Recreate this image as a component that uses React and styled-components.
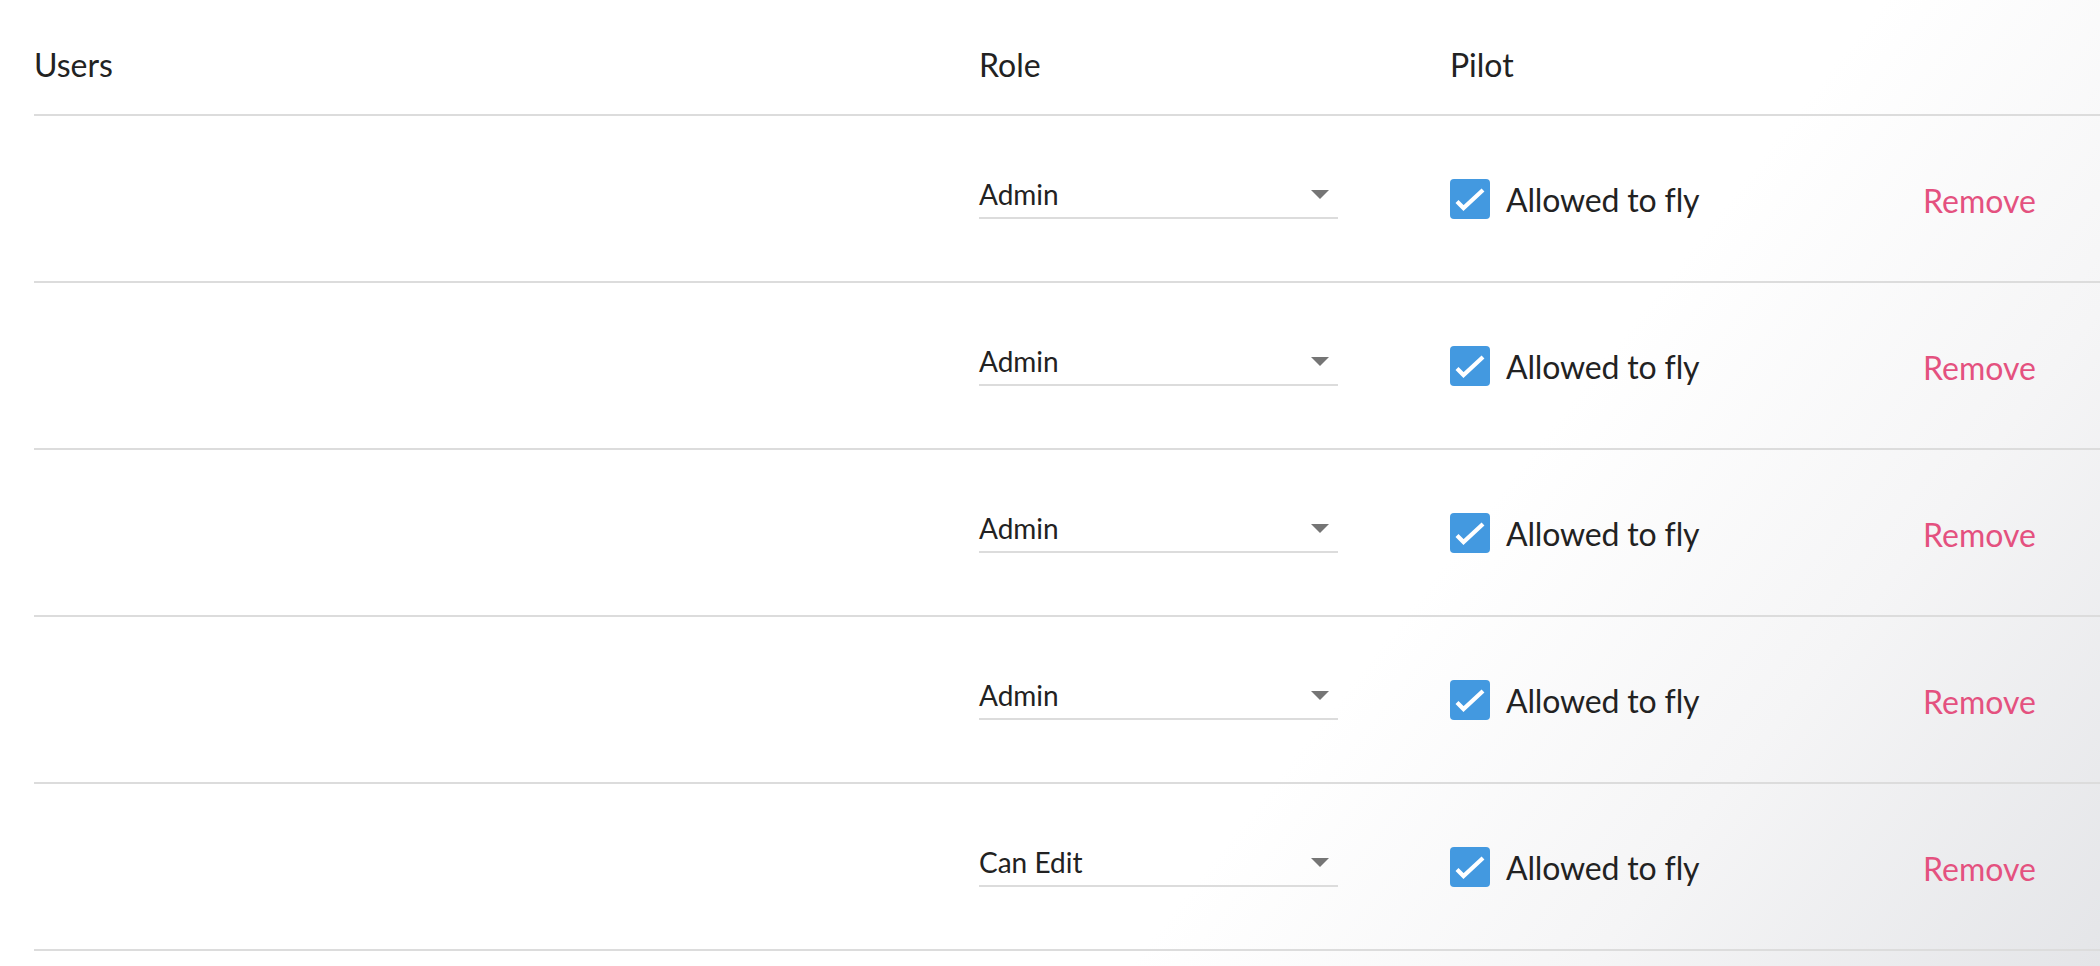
import React from "react";
import styled, { createGlobalStyle } from "styled-components";

const GlobalStyle = createGlobalStyle`
  html, body {
    margin: 0;
    padding: 0;
  }
  body {
    font-family: Lato, "Open Sans", "Liberation Sans", sans-serif;
    color: #222222;
  }
  * { box-sizing: border-box; }
`;

const Page = styled.div`
  min-height: 100vh;
  padding-left: 34px;
  background: linear-gradient(
    128deg,
    #ffffff 0%,
    #ffffff 66%,
    #f5f5f6 82%,
    #e4e5e8 100%
  );
`;

const Table = styled.div`
  display: flex;
  flex-direction: column;
`;

const Row = styled.div`
  display: grid;
  grid-template-columns: 945px 471px 1fr auto;
  border-bottom: 2px solid #dcdcdc;
  height: ${(p) => (p.$header ? "116px" : "167px")};
  padding-top: ${(p) => (p.$header ? "46px" : "4px")};
  align-items: ${(p) => (p.$header ? "start" : "center")};
`;

const HeadCell = styled.div`
  font-size: 32px;
  line-height: 1.2;
  color: #222222;
`;

const Cell = styled.div`
  display: flex;
  align-items: center;
`;

const Select = styled.div`
  width: 359px;
  display: flex;
  align-items: center;
  justify-content: space-between;
  padding: 0 9px 5px 0;
  margin-bottom: 4px;
  border-bottom: 2px solid #dcdcdc;
  font-size: 28px;
  line-height: 1.2;
  color: #222222;
  cursor: pointer;
`;

const Caret = styled.svg`
  width: 18px;
  height: 9px;
  margin-top: -2px;
  fill: #757575;
`;

const CheckLabel = styled.label`
  display: flex;
  align-items: center;
  gap: 16px;
  font-size: 32px;
  line-height: 1.2;
  letter-spacing: -0.15px;
  color: #222222;
  cursor: pointer;
`;

const Box = styled.span`
  width: 40px;
  height: 40px;
  margin-top: -2px;
  border-radius: 4px;
  background: #4399e0;
  display: flex;
  align-items: center;
  justify-content: center;
`;

const RemoveButton = styled.button`
  border: none;
  background: none;
  padding: 2px 64px 0 0;
  font-family: inherit;
  font-size: 32px;
  line-height: 1.2;
  color: #e4517f;
  cursor: pointer;
`;

const rows = ["Admin", "Admin", "Admin", "Admin", "Can Edit"];

function Checkbox() {
  return (
    <Box>
      <svg width="40" height="40" viewBox="0 0 40 40">
        <polyline
          points="7,22.5 13.5,29 33,11"
          fill="none"
          stroke="#ffffff"
          strokeWidth="4.2"
        />
      </svg>
    </Box>
  );
}

export default function App() {
  return (
    <>
      <GlobalStyle />
      <Page>
        <Table>
          <Row $header>
            <HeadCell>Users</HeadCell>
            <HeadCell>Role</HeadCell>
            <HeadCell>Pilot</HeadCell>
            <HeadCell />
          </Row>
          {rows.map((role, i) => (
            <Row key={i}>
              <Cell />
              <Cell>
                <Select>
                  <span>{role}</span>
                  <Caret viewBox="0 0 18 9">
                    <polygon points="0,0 18,0 9,9" />
                  </Caret>
                </Select>
              </Cell>
              <Cell>
                <CheckLabel>
                  <Checkbox />
                  Allowed to fly
                </CheckLabel>
              </Cell>
              <Cell>
                <RemoveButton>Remove</RemoveButton>
              </Cell>
            </Row>
          ))}
        </Table>
      </Page>
    </>
  );
}
